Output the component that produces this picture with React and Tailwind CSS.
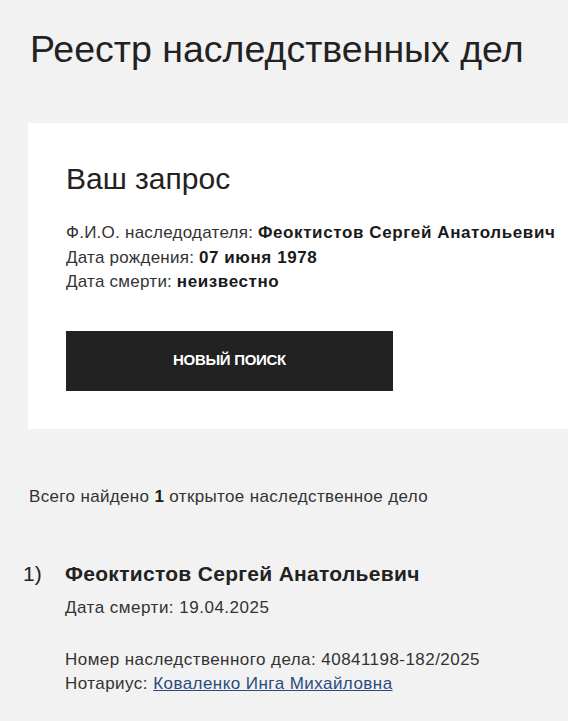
import React from 'react';

const font = { fontFamily: '"Liberation Sans", Arial, sans-serif' };

const query = [
  { label: 'Ф.И.О. наследодателя:', value: 'Феоктистов Сергей Анатольевич' },
  { label: 'Дата рождения:', value: '07 июня 1978' },
  { label: 'Дата смерти:', value: 'неизвестно' },
];

export default function App() {
  return (
    <div className="min-h-screen bg-[#f2f2f2] text-[#222] overflow-hidden" style={font}>
      {/* Title */}
      <h1 className="pt-[28px] pl-[30px] text-[37.5px] leading-[43px] font-normal whitespace-nowrap">
        Реестр наследственных дел
      </h1>

      {/* Request card */}
      <section className="mt-[52px] ml-[28px] bg-white pl-[38px] pt-[39px] pb-[38px]">
        <h2 className="text-[30px] leading-[34px] font-normal">Ваш запрос</h2>
        <div className="mt-[25px] text-[17px] leading-[24.5px] whitespace-nowrap">
          {query.map(q => (
            <p key={q.label}>
              <span className="text-[#333] tracking-[0.25px]">{q.label}</span>{' '}
              <b className="font-bold text-[#1a1a1a] tracking-[0.6px]">{q.value}</b>
            </p>
          ))}
        </div>
        <button className="mt-[36px] w-[327px] h-[60px] bg-[#222] text-white text-[15px] font-bold uppercase tracking-[-0.3px] flex items-center justify-center">
          Новый поиск
        </button>
      </section>

      {/* Results */}
      <p className="mt-[56px] pl-[29px] text-[17px] leading-6 text-[#333] tracking-[0.35px] whitespace-nowrap">
        Всего найдено <b className="font-bold text-[#1a1a1a]">1</b> открытое наследственное дело
      </p>

      <ol className="mt-[51px]">
        <li className="flex">
          <span className="w-[65px] pl-[23px] text-[21px] leading-[28px] shrink-0">1)</span>
          <div className="whitespace-nowrap">
            <h3 className="text-[21px] leading-[28px] font-bold tracking-[0.3px]">Феоктистов Сергей Анатольевич</h3>
            <p className="mt-[8px] text-[17px] leading-6 text-[#333] tracking-[0.5px]">Дата смерти: 19.04.2025</p>
            <div className="mt-[28px] text-[17px] leading-6 text-[#333] tracking-[0.45px]">
              <p>Номер наследственного дела: 40841198-182/2025</p>
              <p>
                Нотариус: <a href="#" className="text-[#2b4a7d] underline">Коваленко Инга Михайловна</a>
              </p>
            </div>
          </div>
        </li>
      </ol>
    </div>
  );
}
